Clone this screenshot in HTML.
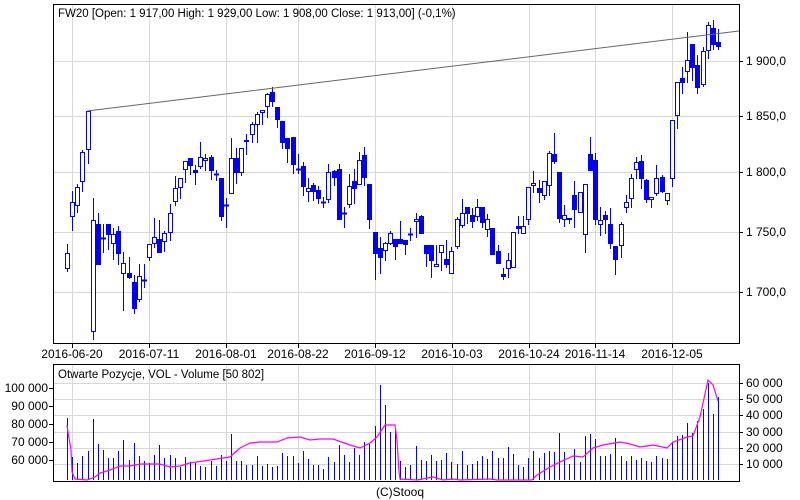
<!DOCTYPE html>
<html><head><meta charset="utf-8"><style>
html,body{margin:0;padding:0;background:#fff;width:800px;height:500px;overflow:hidden}
svg text{font-family:"Liberation Sans",sans-serif;font-size:12px;fill:#000}
</style></head><body>
<svg id="s" width="800" height="500" xmlns="http://www.w3.org/2000/svg" shape-rendering="crispEdges">
<rect width="800" height="500" fill="#fff"/>
<g id="grid" stroke="#d8d8d8" stroke-width="1"></g>
<g id="c"></g>
<line x1="87" y1="111" x2="739" y2="31" stroke="#666" stroke-width="1" shape-rendering="auto"/>
<rect x="53.5" y="4.5" width="686" height="339" fill="none" stroke="#000"/>
<rect x="53.5" y="364.5" width="686" height="117" fill="none" stroke="#000"/>
<text x="58" y="17" style="font-size:11.5px">FW20 [Open: 1 917,00  High: 1 929,00  Low: 1 908,00  Close: 1 913,00] (-0,1%)</text>
<text x="58" y="378" style="font-size:11.5px">Otwarte Pozycje, VOL - Volume [50 802]</text>
<g id="ax"></g>
<text x="400" y="496" text-anchor="middle">(C)Stooq</text>
</svg>
<script>
var NS="http://www.w3.org/2000/svg";
function el(p,t,a,txt){var e=document.createElementNS(NS,t);for(var k in a)e.setAttribute(k,a[k]);if(txt)e.textContent=txt;document.getElementById(p).appendChild(e);return e;}
var vx=[72,149,226,298,375,452,529,595,672],dl=["2016-06-20","2016-07-11","2016-08-01","2016-08-22","2016-09-12","2016-10-03","2016-10-24","2016-11-14","2016-12-05"];
vx.forEach(function(x,i){el("grid","line",{x1:x+.5,y1:5,x2:x+.5,y2:343});el("grid","line",{x1:x+.5,y1:365,x2:x+.5,y2:481});el("ax","line",{x1:x+.5,y1:344,x2:x+.5,y2:348,stroke:"#000"});el("ax","text",{x:x,y:358,"text-anchor":"middle"},dl[i]);});
[[61,"1 900,0"],[116,"1 850,0"],[172,"1 800,0"],[232,"1 750,0"],[292,"1 700,0"]].forEach(function(g){el("grid","line",{x1:54,y1:g[0]+.5,x2:739,y2:g[0]+.5});el("ax","line",{x1:739,y1:g[0]+.5,x2:743,y2:g[0]+.5,stroke:"#000"});el("ax","text",{x:746,y:g[0]+4},g[1]);});
[[383,"60 000"],[399,"50 000"],[415,"40 000"],[432,"30 000"],[448,"20 000"],[464,"10 000"]].forEach(function(g){el("grid","line",{x1:54,y1:g[0]+.5,x2:739,y2:g[0]+.5});el("ax","line",{x1:739,y1:g[0]+.5,x2:743,y2:g[0]+.5,stroke:"#000"});el("ax","text",{x:746,y:g[0]+4},g[1]);});
[[388,"100 000"],[406,"90 000"],[424,"80 000"],[442,"70 000"],[460,"60 000"]].forEach(function(g){el("ax","line",{x1:49,y1:g[0]+.5,x2:53,y2:g[0]+.5,stroke:"#000"});el("ax","text",{x:48,y:g[0]+4,"text-anchor":"end"},g[1]);});
// [bodyTop, bodyBot, high, low, filled]
var C=[[253,268,244,271,0],[202,216,191,230,0],[187,205,184,212,0],[152,181,150,191,0],[111,149,111,163,0],[220,331,198,339,0],[224,264,213,264,1],[238,238,224,252,1],[224,234,224,249,1],[234,243,228,259,0],[231,253,226,264,1],[263,273,252,310,0],[273,277,257,278,1],[282,308,275,313,1],[276,299,264,301,0],[280,280,264,287,1],[244,257,244,260,0],[237,243,218,247,0],[239,252,220,252,1],[233,241,231,251,0],[213,232,204,240,0],[188,201,176,205,0],[178,187,178,198,0],[161,169,161,182,0],[158,165,158,174,1],[170,172,165,184,1],[157,166,142,168,0],[158,160,154,170,0],[157,170,155,179,1],[174,174,170,180,1],[178,216,178,220,1],[205,205,198,227,1],[158,193,138,193,0],[158,172,148,183,1],[148,172,148,175,0],[140,141,134,154,0],[124,134,122,142,0],[114,124,112,142,0],[110,112,110,124,0],[94,106,93,117,0],[92,101,87,106,1],[107,119,107,127,1],[121,142,121,148,1],[138,148,138,162,1],[137,164,137,173,1],[169,169,154,173,1],[166,186,162,195,1],[188,191,178,201,0],[185,191,183,200,1],[190,198,186,203,1],[202,202,197,207,1],[172,199,164,202,0],[171,177,170,185,1],[169,219,164,219,1],[213,213,207,227,1],[186,204,174,207,0],[181,188,169,203,1],[160,184,152,184,0],[155,177,147,185,1],[184,219,184,228,1],[232,253,232,279,1],[248,257,237,273,1],[243,250,242,260,0],[233,243,231,244,0],[239,246,239,259,1],[239,243,221,243,1],[240,244,240,254,1],[234,234,228,240,1],[219,221,213,237,0],[216,233,215,233,1],[245,253,245,266,1],[245,260,245,277,1],[264,266,245,266,0],[245,252,245,270,0],[259,264,240,267,1],[251,273,247,273,0],[219,246,217,248,0],[213,225,199,227,0],[207,213,207,223,1],[215,221,208,227,1],[207,216,199,220,0],[207,222,207,227,1],[219,229,214,236,0],[228,254,228,254,1],[251,263,245,263,1],[274,276,268,279,1],[260,268,253,277,0],[232,267,232,267,0],[226,228,216,233,1],[226,233,216,233,0],[187,219,187,224,0],[183,185,171,192,0],[188,192,180,202,1],[181,195,181,199,0],[153,185,151,195,0],[154,161,133,163,1],[172,218,172,222,1],[215,219,205,226,0],[218,219,218,223,1],[195,209,181,227,1],[192,212,192,212,0],[184,234,184,252,0],[154,170,137,170,1],[160,219,153,224,1],[220,224,207,235,0],[215,219,211,233,1],[224,243,208,248,1],[246,259,246,274,1],[224,245,222,257,0],[202,207,195,212,0],[178,198,174,207,0],[162,169,157,178,0],[161,178,155,188,1],[180,199,179,202,1],[197,199,197,207,0],[178,193,165,195,0],[177,191,175,192,1],[193,200,193,204,0],[120,178,120,186,0],[82,115,82,128,0],[78,82,67,93,1],[60,71,32,82,0],[44,67,44,80,1],[65,87,55,93,1],[51,84,47,86,0],[25,50,22,58,0],[28,44,20,49,1],[42,46,29,49,1]];
var V=[418,457,463,456,451,419,444,450,458,458,451,440,460,443,456,461,463,455,445,458,455,458,467,457,462,463,466,467,461,466,455,461,434,461,461,465,465,456,466,464,467,466,453,456,456,463,451,459,465,465,469,457,462,445,455,462,448,455,442,444,426,385,405,432,430,461,467,465,446,460,461,455,461,460,453,462,464,451,465,464,461,456,459,451,458,458,447,454,465,467,458,451,458,453,451,452,433,452,464,449,462,436,434,439,456,456,454,438,456,461,456,460,458,461,462,456,458,459,442,436,435,423,433,421,409,383,414,397];
var step=651/127;
C.forEach(function(c,i){var x=Math.round(67+i*step);
 el("c","line",{x1:x+.5,y1:c[2],x2:x+.5,y2:c[3]+1,stroke:"#00f"});
 var h=c[1]-c[0];
 if(h<1){el("c","line",{x1:x-2,y1:c[0]+.5,x2:x+3,y2:c[0]+.5,stroke:"#00f","stroke-width":2});}
 else if(c[4])el("c","rect",{x:x-2,y:c[0],width:5,height:h+1,fill:"#00f"});
 else el("c","rect",{x:x-1.5,y:c[0]+.5,width:4,height:h,fill:"#fff",stroke:"#00f"});
 el("c","line",{x1:x+.5,y1:V[i],x2:x+.5,y2:480,stroke:"#00f"});
});
var P=[[67,425],[68,432],[71,450],[72,472],[75,479],[87,480],[95,477],[100,473],[110,470],[120,466],[130,466],[140,464],[160,464],[170,467],[180,466],[190,463],[210,460],[223,458],[230,457],[240,448],[250,443],[260,442],[277,442],[287,438],[300,437],[310,440],[320,439],[333,439],[350,445],[360,448],[370,443],[377,437],[385,425],[395,425],[397,440],[399,472],[400,479],[417,480],[433,477],[443,480],[453,479],[460,480],[490,479],[497,480],[527,480],[532,480],[537,475],[550,467],[560,462],[573,456],[583,457],[593,448],[603,445],[620,442],[630,444],[640,447],[653,445],[667,448],[673,442],[687,437],[693,436],[700,417],[708,380],[713,385],[718,401]];
el("c","polyline",{points:P.map(function(p){return p.join(",")}).join(" "),fill:"none",stroke:"#f0f","stroke-width":1.2,"shape-rendering":"auto"});
</script>
</body></html>
